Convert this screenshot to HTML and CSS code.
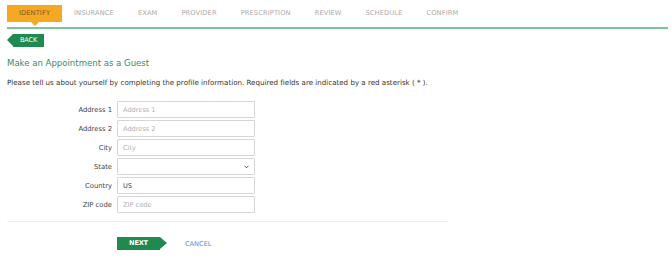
FILE: index.html
```html
<!DOCTYPE html>
<html>
<head>
<meta charset="utf-8">
<link rel="stylesheet" href="styles.css">
</head>
<body>
<div class="page">
  <nav class="tabs">
    <div class="tab active">IDENTIFY</div>
    <div class="tab">INSURANCE</div>
    <div class="tab">EXAM</div>
    <div class="tab">PROVIDER</div>
    <div class="tab">PRESCRIPTION</div>
    <div class="tab">REVIEW</div>
    <div class="tab">SCHEDULE</div>
    <div class="tab">CONFIRM</div>
  </nav>
  <div class="back-row"><a class="back">BACK</a></div>
  <h1 class="title">Make an Appointment as a Guest</h1>
  <p class="intro">Please tell us about yourself by completing the profile information. Required fields are indicated by a red asterisk ( * ).</p>
  <form class="form">
    <div class="row"><label class="lbl">Address 1</label><input class="field" placeholder="Address 1"></div>
    <div class="row"><label class="lbl">Address 2</label><input class="field" placeholder="Address 2"></div>
    <div class="row"><label class="lbl">City</label><input class="field" placeholder="City"></div>
    <div class="row"><label class="lbl">State</label><div class="field select"><svg class="chev" width="5" height="4" viewBox="0 0 5 4"><path d="M0.5 0.8 L2.5 2.8 L4.5 0.8" fill="none" stroke="#555" stroke-width="1"/></svg></div></div>
    <div class="row"><label class="lbl">Country</label><input class="field filled" value="US"></div>
    <div class="row"><label class="lbl">ZIP code</label><input class="field" placeholder="ZIP code"></div>
  </form>
  <div class="sep"></div>
  <div class="actions">
    <a class="next">NEXT</a>
    <a class="cancel">CANCEL</a>
  </div>
</div>
</body>
</html>
```
FILE: styles.css
```css
* { box-sizing: border-box; }
html, body { margin: 0; padding: 0; background: #fff; }
body { font-family: "DejaVu Sans", Verdana, sans-serif; color: #333; }
.page { padding: 5px 4px 0 7px; width: 672px; }

.tabs {
  display: flex;
  border-bottom: 2px solid #7cc4a0;
  height: 24px;
  align-items: flex-start;
}
.tab {
  position: relative;
  height: 17px;
  line-height: 17px;
  padding: 0 12px;
  font-size: 6.7px;
  color: #a9a9a9;
  letter-spacing: 0.1px;
}
.tab.active {
  background: #f7a823;
  color: #7a5a20;
  width: 55px;
  padding: 0;
  text-align: center;
}
.tab.active::after {
  content: "";
  position: absolute;
  left: 24px;
  top: 17px;
  border-left: 4px solid transparent;
  border-right: 4px solid transparent;
  border-top: 4px solid #f7a823;
}

.back-row { display: flex; margin-top: 5px; height: 13px; }
.back {
  position: relative;
  display: block;
  margin-left: 6px;
  width: 31px;
  height: 13px;
  line-height: 13px;
  background: #1f8a4f;
  color: #fff;
  font-size: 6.6px;
  text-align: center;
  letter-spacing: -0.2px;
}
.back::before {
  content: "";
  position: absolute;
  left: -6px;
  top: 0;
  border-top: 6.5px solid transparent;
  border-bottom: 6.5px solid transparent;
  border-right: 6px solid #1f8a4f;
}

.title {
  margin: 9px 0 0 0;
  font-family: "DejaVu Sans Condensed", "DejaVu Sans", sans-serif;
  font-size: 9.5px;
  font-weight: normal;
  color: #3b8a64;
  line-height: 14px;
}
.intro {
  margin: 8px 0 0 0;
  font-size: 7.1px;
  line-height: 10px;
  color: #333;
}

.form { margin-top: 13px; display: flex; flex-direction: column; gap: 2px; }
.row { display: flex; align-items: center; height: 17px; }
.lbl {
  width: 105px;
  text-align: right;
  font-size: 6.8px;
  color: #444;
}
.field {
  margin-left: 5px;
  width: 138px;
  height: 17px;
  border: 1px solid #d6d6d6;
  border-radius: 1px;
  font-family: "DejaVu Sans", Verdana, sans-serif;
  font-size: 6.6px;
  padding: 0 5px;
  color: #444;
  outline: none;
  background: #fff;
}
.field::placeholder { color: #b0b0b0; }
.select { display: flex; align-items: center; justify-content: flex-end; padding-right: 5px; }

.sep {
  margin-top: 8px;
  width: 441px;
  height: 1px;
  background: #efefef;
}
.actions {
  display: flex;
  align-items: center;
  margin-top: 15px;
  padding-left: 110px;
}
.next {
  position: relative;
  display: block;
  width: 43px;
  height: 13px;
  line-height: 13px;
  background: #1f8a4f;
  color: #fff;
  font-size: 6.6px;
  font-weight: bold;
  text-align: center;
  letter-spacing: -0.2px;
}
.next::after {
  content: "";
  position: absolute;
  right: -7px;
  top: 0;
  border-top: 6.5px solid transparent;
  border-bottom: 6.5px solid transparent;
  border-left: 7px solid #1f8a4f;
}
.cancel {
  margin-left: 25px;
  font-size: 6.6px;
  color: #5b8ed6;
}
```
